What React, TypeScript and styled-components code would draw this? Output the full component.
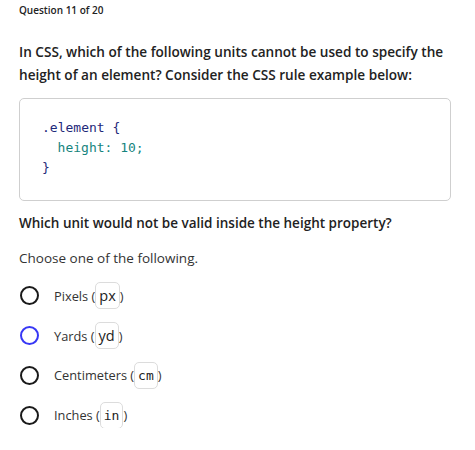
import React from "react";
import styled, { createGlobalStyle } from "styled-components";

const GlobalStyle = createGlobalStyle`
  body {
    margin: 0;
    background: #ffffff;
    font-family: "Open Sans", "Noto Sans", sans-serif;
    color: #222;
  }
`;

const Page = styled.div`
  padding: 2px 19px 0 19px;
  width: 432px;
`;

const Counter = styled.div`
  font-size: 10px;
  font-weight: 600;
  line-height: 16px;
  color: #222;
`;

const Prompt = styled.h2`
  margin: 22px 0 0;
  font-size: 13.6px;
  font-weight: 600;
  line-height: 23px;
  color: #222;
`;

const CodeBox = styled.div`
  margin: 12px 0 0;
  padding: 19px 22px 22px;
  border: 1px solid #cfcfcf;
  border-radius: 5px;
  font-family: "DejaVu Sans Mono", monospace;
  font-size: 13px;
  line-height: 20px;
`;

const CodeLine = styled.div<{ $indent?: boolean; $prop?: boolean }>`
  white-space: pre;
  padding-left: ${({ $indent }) => ($indent ? "15.6px" : "0")};
  color: ${({ $prop }) => ($prop ? "#16847d" : "#1f2a7a")};
`;

const SubPrompt = styled.p`
  margin: 12px 0 0;
  font-size: 13.5px;
  font-weight: 600;
  line-height: 20px;
  color: #222;
`;

const Hint = styled.p`
  margin: 15px 0 0;
  font-size: 13.5px;
  line-height: 20px;
  color: #333;
`;

const Options = styled.div`
  margin-top: 14px;
  display: flex;
  flex-direction: column;
  gap: 14px;
`;

const Option = styled.label`
  display: flex;
  align-items: center;
  gap: 15px;
  height: 26px;
  font-size: 12.8px;
  color: #333;
`;

const Radio = styled.span<{ $focus?: boolean }>`
  width: 15px;
  height: 15px;
  margin-left: 1px;
  border-radius: 50%;
  border: 2px solid ${({ $focus }) => ($focus ? "#3737f5" : "#1a1a1a")};
`;

const Unit = styled.span<{ $mono?: boolean }>`
  display: inline-flex;
  align-items: center;
  height: 25px;
  padding: 0 3px;
  border: 1px solid #dcdcdc;
  border-radius: 5px;
  font-family: ${({ $mono }) =>
    $mono ? `"DejaVu Sans Mono", monospace` : `"Open Sans", sans-serif`};
  font-size: ${({ $mono }) => ($mono ? "13px" : "14.5px")};
  color: #222;
`;

const options = [
  { name: "Pixels", unit: "px", mono: false, focus: false },
  { name: "Yards", unit: "yd", mono: false, focus: true },
  { name: "Centimeters", unit: "cm", mono: true, focus: false },
  { name: "Inches", unit: "in", mono: true, focus: false },
];

export default function App() {
  return (
    <Page>
      <GlobalStyle />
      <Counter>Question 11 of 20</Counter>
      <Prompt>
        In CSS, which of the following units cannot be used to specify the
        height of an element? Consider the CSS rule example below:
      </Prompt>
      <CodeBox>
        <CodeLine>.element {"{"}</CodeLine>
        <CodeLine $indent $prop>
          height: 10;
        </CodeLine>
        <CodeLine>{"}"}</CodeLine>
      </CodeBox>
      <SubPrompt>Which unit would not be valid inside the height property?</SubPrompt>
      <Hint>Choose one of the following.</Hint>
      <Options>
        {options.map((o) => (
          <Option key={o.unit}>
            <Radio $focus={o.focus} />
            <span>
              {o.name} (<Unit $mono={o.mono}>{o.unit}</Unit>)
            </span>
          </Option>
        ))}
      </Options>
    </Page>
  );
}
